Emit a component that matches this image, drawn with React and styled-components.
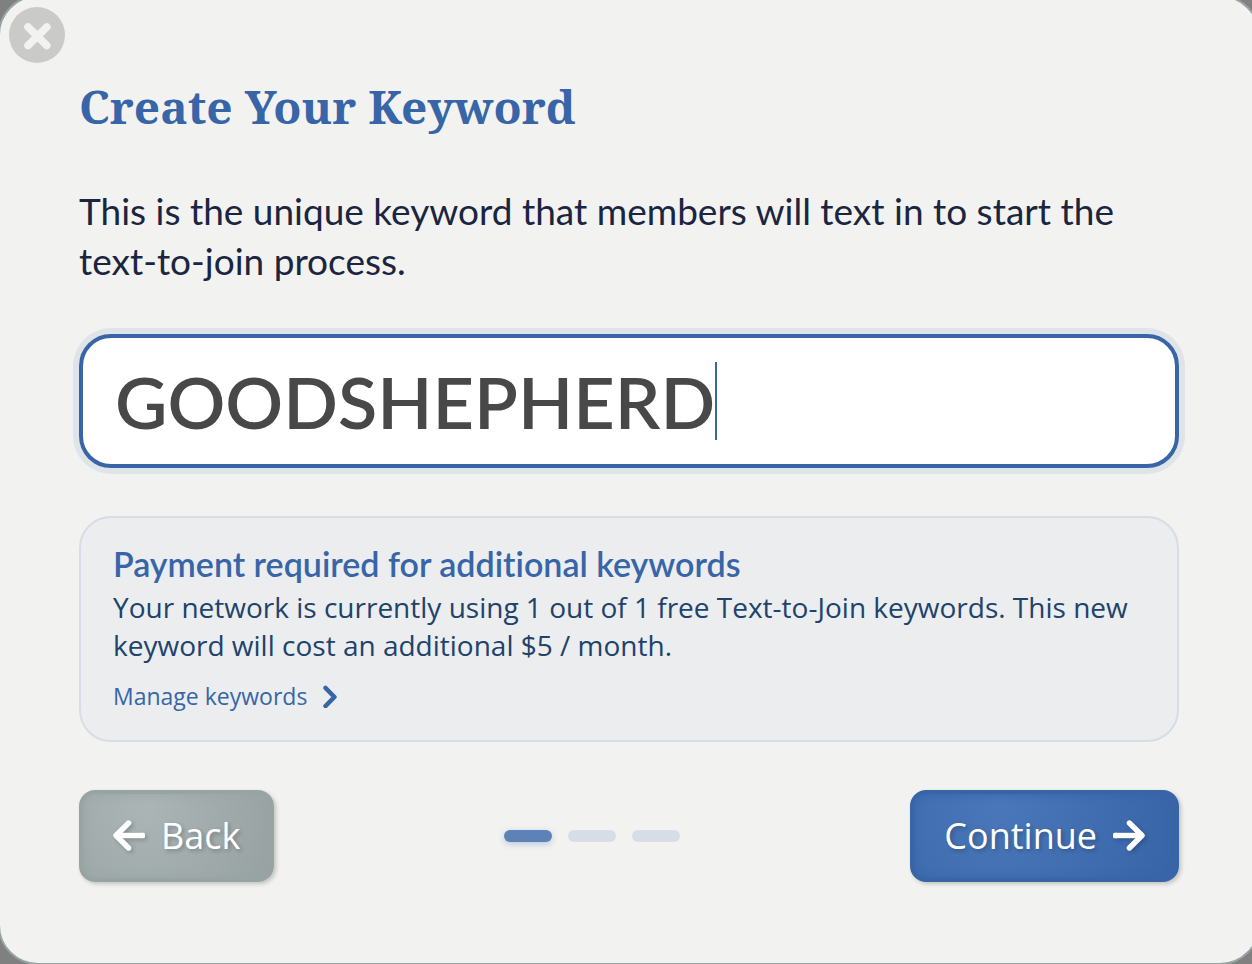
import React, { useState } from "react";
import styled, { createGlobalStyle } from "styled-components";

const GlobalStyle = createGlobalStyle`
    * {
        box-sizing: border-box;
    }

    body {
        margin: 0;
        overflow: hidden;
        background-color: #808080;
        font-family: "Open Sans", sans-serif;
    }
`;

const Modal = styled.main`
    position: relative;
    display: flex;
    flex-direction: column;
    gap: 48px;
    min-height: calc(100vh + 6px);
    margin: -5px -8px 0 -2px;
    padding: 77px 79px 80px;
    border: 2px solid #98a4a4;
    border-radius: 40px;
    background-color: #f2f2f0;
`;

const CloseButton = styled.button`
    position: absolute;
    top: 10px;
    left: 9px;
    width: 56px;
    height: 56px;
    padding: 0;
    border: none;
    border-radius: 50%;
    background-color: #cacac8;
    color: #f2f2f0;
    cursor: pointer;

    svg {
        display: block;
    }
`;

const Title = styled.h1`
    margin: 0;
    color: #3865a8;
    font-family: "Noto Serif", "Liberation Serif", serif;
    font-size: 46px;
    font-weight: 700;
    line-height: 64px;
`;

const Description = styled.p`
    margin: 0;
    color: #1b2540;
    font-family: Lato, sans-serif;
    font-size: 37px;
    font-weight: 400;
    line-height: 50px;
`;

const KeywordField = styled.label`
    display: flex;
    align-items: center;
    height: 134px;
    padding: 0 32px;
    border: 4px solid #3865a8;
    border-radius: 32px;
    background-color: #ffffff;
    box-shadow: 0 0 0 6px #dfe4e8;
    overflow: hidden;
    cursor: text;
`;

const KeywordInput = styled.input`
    field-sizing: content;
    max-width: 100%;
    padding: 0;
    border: none;
    outline: none;
    background: none;
    caret-color: transparent;
    color: #484848;
    font-family: Lato, sans-serif;
    font-size: 72px;
    font-weight: 600;
    line-height: 78px;
    text-transform: uppercase;
`;

const Caret = styled.span`
    flex: none;
    width: 2px;
    height: 78px;
    background-color: #3865a8;
`;

const Notice = styled.section`
    padding: 28px 32px;
    border: 2px solid #d6dde6;
    border-radius: 32px;
    background-color: #ebedee;
`;

const NoticeTitle = styled.h2`
    margin: 0 0 6px;
    color: #3865a8;
    font-family: Lato, sans-serif;
    font-size: 34px;
    font-weight: 600;
    font-variant-ligatures: none;
    line-height: 36px;
`;

const NoticeText = styled.p`
    margin: 0 0 16px;
    color: #21426b;
    font-size: 28px;
    line-height: 38px;
`;

const NoticeLink = styled.a`
    display: flex;
    align-items: center;
    gap: 16px;
    width: fit-content;
    color: #3865a8;
    font-size: 23px;
    line-height: 32px;
    text-decoration: none;
`;

const Footer = styled.footer`
    display: flex;
    align-items: center;
    justify-content: space-between;
`;

const Button = styled.button`
    display: flex;
    align-items: center;
    gap: 16px;
    height: 92px;
    padding: 0 30px;
    border: 4px solid ${({ $primary }) => ($primary ? "#3865a6" : "#98a4a4")};
    border-radius: 16px;
    background: ${({ $primary }) =>
        $primary
            ? "radial-gradient(circle at 33% 20%, #4a77ba, #3865a8 95%)"
            : "radial-gradient(circle at 33% 20%, #abb5b6, #98a2a3 95%)"};
    box-shadow:
        inset 0 0 8px ${({ $primary }) => ($primary ? "#3865a6" : "#98a4a4")},
        2px 2px 4px rgba(0, 0, 0, 0.2);
    color: #ffffff;
    font-family: inherit;
    font-size: 36px;
    line-height: 50px;
    text-shadow: 2px 2px 4px rgba(0, 0, 0, 0.25);
    cursor: pointer;

    svg {
        flex: none;
        filter: drop-shadow(2px 2px 2px rgba(0, 0, 0, 0.2));
    }
`;

const Steps = styled.div`
    display: flex;
    gap: 16px;
`;

const Step = styled.span`
    width: 48px;
    height: 12px;
    border-radius: 6px;
    background-color: ${({ $active }) => ($active ? "#5d82b8" : "#d6dde6")};
    box-shadow: ${({ $active }) => ($active ? "0 2px 6px rgba(56, 101, 168, 0.3)" : "none")};
`;

function CloseIcon() {
    return (
        <svg width="56" height="56" viewBox="0 0 56 56" fill="none" stroke="currentColor" strokeWidth="7.6" strokeLinecap="round" aria-hidden="true">
            <path d="M19 20 L37.8 38.5 M37.8 20 L19 38.5" />
        </svg>
    );
}

function ArrowIcon({ flip }) {
    return (
        <svg width="32" height="32" viewBox="0 0 32 32" fill="none" stroke="currentColor" aria-hidden="true">
            <g transform={flip ? "translate(32 0) scale(-1 1)" : undefined}>
                <path d="M15.6 3 L3 15.5 L15.6 28" strokeWidth="5.4" strokeLinecap="round" strokeLinejoin="round" />
                <path d="M4 15.5 H29.5" strokeWidth="5.4" />
                <rect x="27" y="12.8" width="5" height="5.4" rx="1.5" fill="currentColor" stroke="none" />
            </g>
        </svg>
    );
}

function ChevronIcon() {
    return (
        <svg width="14" height="24" viewBox="0 0 14 24" fill="none" stroke="currentColor" strokeWidth="4.6" strokeLinecap="round" strokeLinejoin="round" aria-hidden="true">
            <path d="M2.6 4 L11.4 13 L2.6 22" />
        </svg>
    );
}

export default function App() {
    const [keyword, setKeyword] = useState("GOODSHEPHERD");

    return (
        <>
            <GlobalStyle />
            <Modal>
                <CloseButton type="button" aria-label="Close"><CloseIcon /></CloseButton>
                <Title>Create Your Keyword</Title>
                <Description id="keyword-help">
                    This is the unique keyword that members will text in to start the text-to-join process.
                </Description>
                <KeywordField htmlFor="keyword">
                    <KeywordInput
                        id="keyword"
                        type="text"
                        aria-label="Keyword"
                        aria-describedby="keyword-help"
                        value={keyword}
                        onChange={(e) => setKeyword(e.target.value)}
                    />
                    <Caret />
                </KeywordField>
                <Notice>
                    <NoticeTitle>Payment required for additional keywords</NoticeTitle>
                    <NoticeText>
                        Your network is currently using 1 out of 1 free Text-to-Join keywords. This new keyword will cost an additional $5 / month.
                    </NoticeText>
                    <NoticeLink href="#/keywords">Manage keywords <ChevronIcon /></NoticeLink>
                </Notice>
                <Footer>
                    <Button type="button"><ArrowIcon /> Back</Button>
                    <Steps>
                        <Step $active />
                        <Step />
                        <Step />
                    </Steps>
                    <Button type="button" $primary>Continue <ArrowIcon flip /></Button>
                </Footer>
            </Modal>
        </>
    );
}
